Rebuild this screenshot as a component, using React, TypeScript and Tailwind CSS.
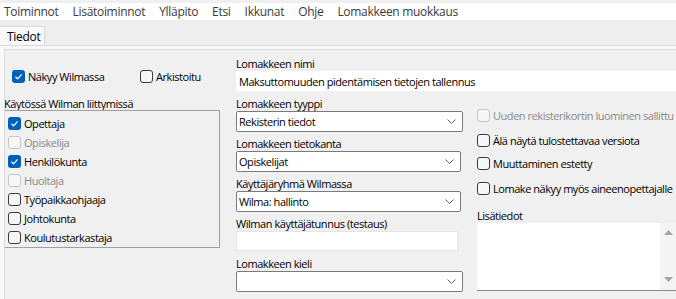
import React from 'react';

const MENU = ['Toiminnot', 'Lisätoiminnot', 'Ylläpito', 'Etsi', 'Ikkunat', 'Ohje', 'Lomakkeen muokkaus'];

const ROLES: { label: string; checked?: boolean; disabled?: boolean }[] = [
  { label: 'Opettaja', checked: true },
  { label: 'Opiskelija', disabled: true },
  { label: 'Henkilökunta', checked: true },
  { label: 'Huoltaja', disabled: true },
  { label: 'Työpaikkaohjaaja' },
  { label: 'Johtokunta' },
  { label: 'Koulutustarkastaja' },
];

const Check = ({ checked, disabled }: { checked?: boolean; disabled?: boolean }) => {
  if (checked) {
    return (
      <span className="w-[13px] h-[13px] shrink-0 rounded-[3px] bg-[#005fb8] flex items-center justify-center">
        <svg width="9" height="9" viewBox="0 0 9 9">
          <path d="M1.5 4.8 L3.6 6.8 L7.6 2.4" fill="none" stroke="white" strokeWidth="1.2" />
        </svg>
      </span>
    );
  }
  return (
    <span
      className={`w-[13px] h-[13px] shrink-0 rounded-[3px] border bg-[#f6f6f6] ${
        disabled ? 'border-[#c6c6c6]' : 'border-[#3a3a3a]'
      }`}
    />
  );
};

const CheckRow = ({
  label,
  checked,
  disabled,
  className = '',
}: {
  label: string;
  checked?: boolean;
  disabled?: boolean;
  className?: string;
}) => (
  <div className={`flex items-center gap-[3px] whitespace-nowrap ${className}`}>
    <Check checked={checked} disabled={disabled} />
    <span className={`leading-[15px] ${disabled ? 'text-[#8a8a8a]' : 'text-black'}`}>{label}</span>
  </div>
);

const Label = ({ children, className = '' }: { children: React.ReactNode; className?: string }) => (
  <div className={`h-[20px] flex items-end leading-[14px] text-black whitespace-nowrap ${className}`}>{children}</div>
);

const Chevron = () => (
  <svg width="9" height="5" viewBox="0 0 9 5" className="shrink-0">
    <path d="M0.5 0.5 L4.5 4.5 L8.5 0.5" fill="none" stroke="#5f5f5f" strokeWidth="1" />
  </svg>
);

const Select = ({ value, width }: { value: string; width: string }) => (
  <div
    className={`${width} h-[21px] bg-white border border-[#7a7a7a] rounded-[2px] flex items-center justify-between pl-[2px] pr-[6px]`}
  >
    <span className="leading-[15px] text-black whitespace-nowrap">{value}</span>
    <Chevron />
  </div>
);

export default function App() {
  return (
    <div className="w-[676px] h-[299px] overflow-hidden bg-[#f0f0f0] text-[11px] tracking-[-0.45px] font-['Open_Sans','Noto_Sans',sans-serif] flex flex-col">
      {/* menu bar */}
      <div className="pt-[3px] shrink-0">
        <div className="h-[17px] bg-white flex items-center pl-[4px] gap-[14px] text-[12px] tracking-[-0.3px] text-[#3a3a3a]">
          {MENU.map((m) => (
            <span key={m} className="leading-[17px] whitespace-nowrap">
              {m}
            </span>
          ))}
        </div>
      </div>

      {/* tabs */}
      <div className="h-[26px] shrink-0 bg-[#eeeeee] flex items-end border-b border-[#dadada]">
        <div className="h-[19px] w-[45px] bg-[#f9f9f9] border-r border-t border-[#dadada] flex items-center pl-[7px] leading-[15px] text-[12px] tracking-[-0.3px] text-black">
          Tiedot
        </div>
      </div>

      {/* tab page */}
      <div className="flex-1 min-h-0 bg-[#f9f9f9] pt-[3px] pl-[4px] flex">
        <div className="flex-1 min-w-0 overflow-hidden bg-[#f0f0f0] border-l border-t border-[#dadada] flex">
          {/* left column */}
          <div className="w-[231px] shrink-0 flex flex-col">
            <div className="mt-[20px] h-[13px] flex items-center">
              <CheckRow label="Näkyy Wilmassa" checked className="ml-[7px] w-[128px]" />
              <CheckRow label="Arkistoitu" />
            </div>
            <div className="mt-[13px] -ml-px leading-[15px] text-black">Käytössä Wilman liittymissä</div>
            <div className="mt-[-1px] -ml-px w-[216px] border border-[#a0a0a0] pt-[3px] flex flex-col">
              {ROLES.map((r) => (
                <CheckRow
                  key={r.label}
                  label={r.label}
                  checked={r.checked}
                  disabled={r.disabled}
                  className="h-[19px] pl-[3px]"
                />
              ))}
            </div>
          </div>

          {/* middle + right */}
          <div className="flex-1 flex flex-col min-w-0">
            <Label className="mt-[1px]">Lomakkeen nimi</Label>
            <div className="h-[20px] w-full bg-white flex items-center pl-[3px] leading-[15px] text-black whitespace-nowrap">
              Maksuttomuuden pidentämisen tietojen tallennus
            </div>

            <div className="flex">
              <div className="w-[241px] shrink-0 flex flex-col">
                <Label>Lomakkeen tyyppi</Label>
                <Select value="Rekisterin tiedot" width="w-[227px]" />
                <Label className="-mt-px">Lomakkeen tietokanta</Label>
                <Select value="Opiskelijat" width="w-[225px]" />
                <Label className="-mt-px">Käyttäjäryhmä Wilmassa</Label>
                <Select value="Wilma: hallinto" width="w-[225px]" />
                <Label className="-mt-px">Wilman käyttäjätunnus (testaus)</Label>
                <div className="w-[222px] h-[20px] bg-white border border-[#e6e6e6]" />
                <Label>Lomakkeen kieli</Label>
                <Select value="" width="w-[227px]" />
              </div>

              <div className="flex-1 min-w-0 flex flex-col">
                <CheckRow label="Uuden rekisterikortin luominen sallittu" disabled className="mt-[18px] h-[13px]" />
                <CheckRow label="Älä näytä tulostettavaa versiota" className="mt-[12px] h-[13px]" />
                <CheckRow label="Muuttaminen estetty" className="mt-[10px] h-[13px]" />
                <CheckRow label="Lomake näkyy myös aineenopettajalle" className="mt-[12px] h-[13px]" />
                <Label className="mt-[8px]">Lisätiedot</Label>
                <div className="h-[68px] bg-white border-b border-[#8a8a8a] flex justify-end">
                  <div className="w-[16px] bg-[#f4f4f4] flex flex-col items-center justify-between pt-[7px] pb-[8px]">
                    <svg width="9" height="5" viewBox="0 0 9 5">
                      <path d="M0 5 L4.5 0 L9 5 Z" fill="#a3a3a3" />
                    </svg>
                    <svg width="9" height="5" viewBox="0 0 9 5">
                      <path d="M0 0 L4.5 5 L9 0 Z" fill="#a3a3a3" />
                    </svg>
                  </div>
                </div>
              </div>
            </div>
          </div>
        </div>
      </div>
    </div>
  );
}
